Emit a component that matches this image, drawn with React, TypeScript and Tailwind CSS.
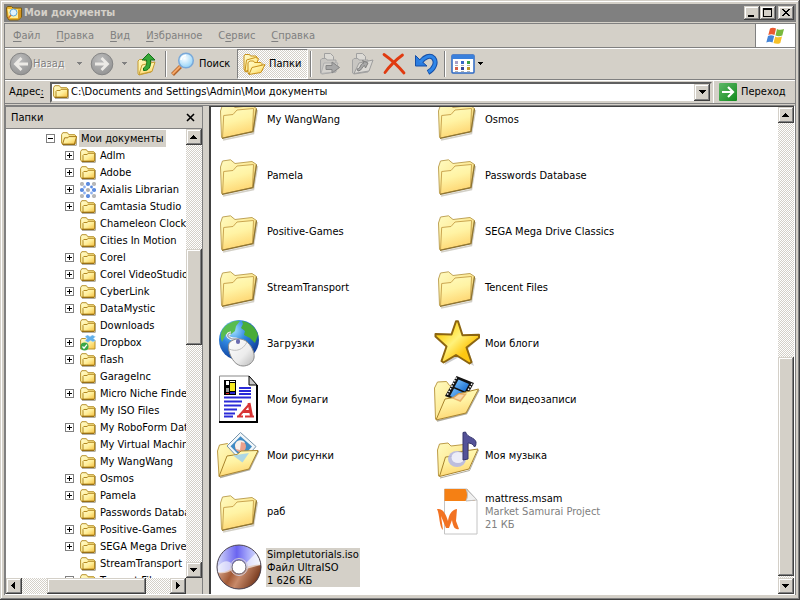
import type { ReactNode } from "react";

type TreeIcon = "folder" | "axialis" | "dropbox";

interface TreeItem {
  name: string;
  expandable?: boolean;
  icon?: TreeIcon;
}

interface FileItem {
  name: string;
  icon: ReactNode;
  details?: string[];
  selected?: boolean;
}

const MENU = [
  ["", "Ф", "айл"],
  ["", "П", "равка"],
  ["", "В", "ид"],
  ["", "И", "збранное"],
  ["С", "е", "рвис"],
  ["", "С", "правка"],
];

const TREE: TreeItem[] = [
  { name: "Adlm", expandable: true },
  { name: "Adobe", expandable: true },
  { name: "Axialis Librarian", expandable: true, icon: "axialis" },
  { name: "Camtasia Studio", expandable: true },
  { name: "Chameleon Clock Files" },
  { name: "Cities In Motion" },
  { name: "Corel", expandable: true },
  { name: "Corel VideoStudio", expandable: true },
  { name: "CyberLink", expandable: true },
  { name: "DataMystic", expandable: true },
  { name: "Downloads" },
  { name: "Dropbox", expandable: true, icon: "dropbox" },
  { name: "flash", expandable: true },
  { name: "GarageInc" },
  { name: "Micro Niche Finder", expandable: true },
  { name: "My ISO Files" },
  { name: "My RoboForm Data", expandable: true },
  { name: "My Virtual Machines" },
  { name: "My WangWang" },
  { name: "Osmos", expandable: true },
  { name: "Pamela", expandable: true },
  { name: "Passwords Database" },
  { name: "Positive-Games", expandable: true },
  { name: "SEGA Mega Drive", expandable: true },
  { name: "StreamTransport" },
  { name: "Tencent Files", expandable: true },
];

const RAISED =
  "bg-[#d4d0c8] shadow-[inset_-1px_-1px_#404040,inset_1px_1px_#d4d0c8,inset_-2px_-2px_#808080,inset_2px_2px_#fff]";
const DITHER =
  "bg-[repeating-conic-gradient(#fff_0_25%,#d4d0c8_0_50%)] bg-[length:2px_2px]";

function Gradients() {
  return (
    <svg className="absolute size-0" aria-hidden="true">
      <defs>
        <linearGradient id="front" x1="0" y1="0" x2="0.3" y2="1">
          <stop offset="0" stopColor="#fffcc0" />
          <stop offset="0.5" stopColor="#fff3a4" />
          <stop offset="1" stopColor="#fed672" />
        </linearGradient>
        <linearGradient id="back" x1="0" y1="0" x2="1" y2="1">
          <stop offset="0" stopColor="#fffbc0" />
          <stop offset="0.5" stopColor="#fdeb98" />
          <stop offset="1" stopColor="#dcb040" />
        </linearGradient>
        <linearGradient id="small" x1="0" y1="0" x2="1" y2="1">
          <stop offset="0" stopColor="#fffcd0" />
          <stop offset="0.5" stopColor="#ffee98" />
          <stop offset="1" stopColor="#f6c040" />
        </linearGradient>
        <radialGradient id="nav" cx="0.4" cy="0.3" r="0.8">
          <stop offset="0" stopColor="#bcbcbc" />
          <stop offset="1" stopColor="#909090" />
        </radialGradient>
        <radialGradient id="globe" cx="0.35" cy="0.25" r="0.85">
          <stop offset="0" stopColor="#a8e4ff" />
          <stop offset="0.4" stopColor="#2e86e0" />
          <stop offset="1" stopColor="#0a2f8c" />
        </radialGradient>
        <linearGradient id="mouse" x1="0" y1="0" x2="1" y2="1">
          <stop offset="0" stopColor="#fff" />
          <stop offset="0.6" stopColor="#ececec" />
          <stop offset="1" stopColor="#b8b8b8" />
        </linearGradient>
        <linearGradient id="star" x1="0" y1="0" x2="1" y2="1">
          <stop offset="0.2" stopColor="#ffd51c" />
          <stop offset="0.45" stopColor="#fff27a" />
          <stop offset="0.7" stopColor="#ffc812" />
        </linearGradient>
        <linearGradient id="discTop" x1="0" y1="0" x2="1" y2="0">
          <stop offset="0" stopColor="#d8dcfa" />
          <stop offset="0.45" stopColor="#6a64f0" />
          <stop offset="0.7" stopColor="#a6a8fa" />
          <stop offset="1" stopColor="#e4ecfc" />
        </linearGradient>
        <linearGradient id="discBottom" x1="0" y1="0" x2="1" y2="0.3">
          <stop offset="0" stopColor="#e0b49c" />
          <stop offset="0.4" stopColor="#a35a36" />
          <stop offset="0.6" stopColor="#c88a6a" />
          <stop offset="1" stopColor="#7a3c20" />
        </linearGradient>
        <radialGradient id="lens" cx="0.4" cy="0.35" r="0.7">
          <stop offset="0" stopColor="#fff" />
          <stop offset="1" stopColor="#8cd0f8" />
        </radialGradient>
        <linearGradient id="go" x1="0" y1="0" x2="1" y2="1">
          <stop offset="0" stopColor="#5fb868" />
          <stop offset="1" stopColor="#118a1c" />
        </linearGradient>
        <linearGradient id="film" x1="0" y1="0" x2="1" y2="1">
          <stop offset="0" stopColor="#7cc4ff" />
          <stop offset="1" stopColor="#0c62c8" />
        </linearGradient>
      </defs>
    </svg>
  );
}

/* ---------- small icons ---------- */

function SmallFolder({ open = false }: { open?: boolean }) {
  return (
    <svg viewBox="0 0 16 16" className="size-4 shrink-0">
      <path d="M2 14.300h13.300V5" fill="none" stroke="#77705c" opacity="0.7" />
      <path d="M.6 12V3.700l1.200-2h4.600l1.400 2h6l1 1.200v7.400l-1 1H1.800z" fill="url(#small)" stroke="#b8922c" />
      {open ? (
        <path d="M1.500 13.200 3.600 6.800h3.200l1-1.200h7.800L13.300 13.200z" fill="url(#small)" stroke="#a87a18" />
      ) : (
        <path d="M3 13.200V7.300l.8-.8h3.400l.9-1.200h6.400v7.900z" fill="url(#small)" stroke="#b48a22" />
      )}
      <path d="M1.500 13.400h12.500" stroke="#956c12" />
    </svg>
  );
}

function AxialisIcon() {
  const dots = [
    [2, 2, "#b8b8b8"], [8, 2, "#5b8be0"], [14, 2, "#b8b8b8"],
    [4.5, 5, "#8fb2f0"], [11.5, 5, "#5b8be0"],
    [2, 8, "#5b8be0"], [8, 8, "#b0b0b0"], [14, 8, "#5b8be0"],
    [4.5, 11, "#8fb2f0"], [11.5, 11, "#8fb2f0"],
    [2, 14, "#b8b8b8"], [8, 14, "#5b8be0"], [14, 14, "#b8b8b8"],
  ] as const;
  return (
    <svg viewBox="0 0 16 16" className="size-4 shrink-0">
      {dots.map(([cx, cy, fill], i) => (
        <circle key={i} cx={cx} cy={cy} r={i === 3 || i === 4 || i === 8 || i === 9 ? 1.4 : 2.1} fill={fill} />
      ))}
    </svg>
  );
}

function DropboxIcon() {
  return (
    <svg viewBox="0 0 16 16" className="size-4 shrink-0">
      <path d="M.6 14V5l1-1.500h4L7 5h8v9z" fill="url(#small)" stroke="#b8922c" />
      <path d="m5 1.500 2.500-1.500 2.500 1.500 2.500-1.500 3 1.800-2 1.700 2 2-2.500 1.500-2.500-1.500L8 7.500 5 5.700l2-2z" fill="#62b0ea" stroke="#cfe8fb" strokeWidth=".5" />
      <circle cx="4.500" cy="11.500" r="4" fill="#3aa648" />
      <path d="m2.500 11.500 1.500 1.700 3-3.500" fill="none" stroke="#fff" strokeWidth="1.300" />
    </svg>
  );
}

function TitleIcon() {
  return (
    <svg viewBox="0 0 16 16" className="size-4 shrink-0">
      <path d="M1 12 .5 3l1-1.500h4L7 3h8.500v9l-3 3H3z" fill="#f0b830" stroke="#7c5c10" />
      <path d="M1.500 4 12 4.500V13H3z" fill="#fff0a0" />
      <path d="M12 5h3v7l-3 2.500z" fill="#d89820" />
      <circle cx="7.500" cy="7.500" r="3.500" fill="#dff3ff" stroke="#62a8dc" />
      <path d="m5 10-2.500 3" stroke="#d8762a" strokeWidth="1.500" />
    </svg>
  );
}

function NavCircle({ forward = false }: { forward?: boolean }) {
  return (
    <svg viewBox="0 0 24 24" className="size-6 shrink-0">
      <circle cx="12" cy="12" r="10.800" fill="url(#nav)" stroke="#858585" />
      <path
        d={forward ? "M5 12h12M11.500 6l6 6-6 6" : "M19 12H7M12.500 6l-6 6 6 6"}
        fill="none"
        stroke="#eceae6"
        strokeWidth="2.800"
      />
    </svg>
  );
}

function Caret({ light = false }: { light?: boolean }) {
  return (
    <svg viewBox="0 0 7 4" className="h-1 w-[7px] shrink-0" shapeRendering="crispEdges">
      <path d="M1 0h5v1H5v1H4v1H3V2H2V1H1z" fill={light ? "#808080" : "#000"} />
    </svg>
  );
}

function UpIcon() {
  return (
    <svg viewBox="0 0 24 24" className="size-6 shrink-0">
      <path d="M2 21.500V9L3.500 7.500H8L9 9h6v11l-12 3z" fill="url(#back)" stroke="#c49a30" />
      <path d="M3 22.500 6 13l13-3-3 9.500z" fill="url(#front)" stroke="#c49a30" />
      <path d="M7.500 18.500c5 .5 7.500-3 7-10.500h4.500L12.500 1.500 6 8h4.500c.5 4 0 6-3 8z" fill="#37a837" stroke="#147018" />
    </svg>
  );
}

function SearchIcon() {
  return (
    <svg viewBox="0 0 24 24" className="size-6 shrink-0">
      <path d="M9.500 14.500 1.500 22.500" stroke="#b0622a" strokeWidth="4" />
      <path d="M9 14.500 1.500 22" stroke="#f5a868" strokeWidth="2" />
      <circle cx="15" cy="8.500" r="7.300" fill="url(#lens)" stroke="#7aa8d8" strokeWidth="1.500" />
      <path d="M10 8a5 5 0 0 1 5-4.500" stroke="#fff" strokeWidth="1.500" fill="none" />
    </svg>
  );
}

function FoldersIcon() {
  return (
    <svg viewBox="0 0 24 24" className="size-6 shrink-0">
      <path d="M2 17V4l1-1.500h4.500l1 1.500H14l1 1v11L3.500 20z" fill="url(#small)" stroke="#c8911c" />
      <path d="M3 19.500 4.500 8l9-2.500 3 1-3 9z" fill="url(#small)" stroke="#c8911c" />
      <path d="M6 21V10.500L8 9h3.500l1 1.500H19l1 1V19L7 22z" fill="url(#small)" stroke="#c8911c" />
      <path d="M7 22.500 10 15.500l13-3-4 8z" fill="url(#small)" stroke="#c8911c" />
    </svg>
  );
}

function MoveIcon({ copy = false }: { copy?: boolean }) {
  return (
    <svg viewBox="0 0 24 24" className="size-6 shrink-0">
      <path d="M6.500 1.500h6l3 3v9h-9z" fill="#dcdad5" stroke="#a0a0a0" />
      <path d="M2.500 21V8L4 6.500h4L9 8h9v12l-14 2z" fill="#c8c6c2" stroke="#a4a4a4" />
      {copy ? (
        <>
          <path d="M4 21.500 9 11l14-3-4 11z" fill="#dbd9d5" stroke="#9c9c9c" />
          <path d="M7 17c4 0 3-6 7-6l-1.500-2.500L18 11l-2.500 5-1-2.500C12 14 12 19 8 19z" fill="#a8a8a8" stroke="#808080" />
        </>
      ) : (
        <>
          <path d="M3 21.500 6 11h14l-3 9z" fill="#d4d2ce" stroke="#b0b0b0" />
          <path d="M8 13.500h6v-3.500l7.500 5.500-7.500 5.500v-3.500H8z" fill="#a8a8a8" stroke="#858585" />
        </>
      )}
    </svg>
  );
}

function DeleteIcon() {
  return (
    <svg viewBox="0 0 24 24" className="size-6 shrink-0">
      <path d="M2 2.500C7 6 17 15 22 21M20.500 3C15 7 7 15 3 20.500" fill="none" stroke="#e03a10" strokeWidth="2.800" strokeLinecap="round" />
    </svg>
  );
}

function UndoIcon() {
  return (
    <svg viewBox="0 0 24 24" className="size-6 shrink-0">
      <path d="M7 9.500C10 5 16 2.500 19.500 6c3.500 4 1 11-5.500 14.500" fill="none" stroke="#174fa6" strokeWidth="5" />
      <path d="M1.500 3.500V14h11.500L9 10.500 5 7z" fill="#2a7ce0" stroke="#174fa6" />
      <path d="M6 10.500C10 5 16 2.500 19.500 6c3.500 4 1 10.500-5 14" fill="none" stroke="#2f86e8" strokeWidth="3" />
    </svg>
  );
}

function ViewsIcon() {
  const colors = ["#a8a0c8", "#3868c8", "#38a048", "#d86048", "#384898", "#c09828"];
  return (
    <svg viewBox="0 0 24 24" className="size-6 shrink-0">
      <rect x="1" y="3" width="22" height="18" rx="1" fill="#fff" stroke="#2c68c4" strokeWidth="1.500" />
      <path d="M1 3h22v4H1z" fill="#3a80dc" />
      {colors.map((c, i) => (
        <g key={c}>
          <rect x={4 + (i % 3) * 6} y={i < 3 ? 9 : 15} width="3" height="3" fill={c} />
          <path d={`M${4 + (i % 3) * 6} ${i < 3 ? 13.5 : 19.5}h3`} stroke="#b0b0b0" />
        </g>
      ))}
    </svg>
  );
}

function GoIcon() {
  return (
    <svg viewBox="0 0 18 18" className="size-[18px] shrink-0">
      <rect width="18" height="18" rx="1" fill="url(#go)" />
      <path d="M3 9h10M9 4l5 5-5 5" fill="none" stroke="#fff" strokeWidth="2.200" />
    </svg>
  );
}

function WindowsLogo() {
  return (
    <svg viewBox="0 0 20 20" className="size-5">
      <path d="M4 2.500c2-1.200 4-1 6 0L8.500 9c-2-1-4-1-6.200 0z" fill="#ea5a30" />
      <path d="M11 3c2.500 1.200 4.500 1 7 0l-1.700 6.500c-2.300 1-4.500 1-6.800 0z" fill="#78b83c" />
      <path d="M2 10c2.200-1.200 4.200-1 6.200 0l-1.700 6.500c-2-1-4-1-6.200 0z" fill="#4484d8" />
      <path d="M9.200 10.500c2.300 1.200 4.500 1 6.800 0L14.300 17c-2.300 1.200-4.500 1-6.800 0z" fill="#f6c028" />
    </svg>
  );
}

/* ---------- 48px icons ---------- */

function FolderIcon() {
  return (
    <svg viewBox="0 0 48 48" className="size-12 shrink-0">
      <path d="M7 45 37.500 38.500 41.500 15" fill="none" stroke="#a8a290" strokeWidth="1.500" opacity="0.5" />
      <path d="M5.500 42.500 4.500 16l2-6 8-1.200 4.500 3.700L36 10.500l4.500 3L37 36.500z" fill="url(#back)" stroke="#c0a458" />
      <path d="m6.500 43 1.200-22.500 9.300-1 4-4.500L37.500 13.500 36.500 36.500z" fill="url(#front)" stroke="#cba650" />
      <path d="m6 43.300 31-6.600 3.500-23" fill="none" stroke="#8d7434" strokeWidth="1.200" />
    </svg>
  );
}

function OpenFolder({ children }: { children: ReactNode }) {
  return (
    <svg viewBox="0 0 48 48" className="size-12 shrink-0">
      <path d="M3.500 45 1.500 16l2-5 8-1.500 3 3.500 18-2.500V35z" fill="url(#back)" stroke="#bd9c48" />
      {children}
      <path d="M4 46.500 35 39l9.500-22.500" fill="none" stroke="#8c8670" strokeWidth="1.500" opacity="0.7" />
      <path d="m3.500 45.500 7-19.500 11-1.500 4-4.500L44 16 34.500 38z" fill="url(#front)" stroke="#a8832c" />
    </svg>
  );
}

function PicturesIcon() {
  return (
    <svg viewBox="0 0 48 48" className="size-12 shrink-0">
      <path d="M3 45 1.500 20l2-6 8-1.500 3 3 18-2V35z" fill="url(#back)" stroke="#bd9c48" />
      <path d="m11 15 13.500-13.500L40 15.500 26 31z" fill="#f2f7fa" stroke="#7895ab" />
      <path d="m14.500 15.200 10-10L36 15.500 26 27z" fill="#408bc4" />
      <circle cx="24.500" cy="15.500" r="5.500" fill="#eaa08c" />
      <path d="M19 15c0-7 9-7 10-3l-4-1-1 8-4-1z" fill="#f8f0ea" />
      <path d="M4 46.500 33.500 38.500 42.500 20" fill="none" stroke="#8c8670" strokeWidth="1.500" opacity="0.7" />
      <path d="m3 45.500 8-20.500 10-1.500 4-3.500L42 19.500 33 38z" fill="url(#front)" stroke="#a8832c" />
      <path d="m17 24.500 16-2.500-6.500 9.500z" fill="#a4d4ea" opacity="0.9" />
    </svg>
  );
}

function VideosIcon() {
  return (
    <svg viewBox="0 0 48 48" className="size-12 shrink-0">
      <path d="M1.500 44 .5 13l3-6 9-.5 3 4 15-1.500V35z" fill="url(#back)" stroke="#bd9c48" />
      <path d="M22.500 1 40 8 29 28 11 21z" fill="#111" />
      <path d="m24.500 4.500 10.500 4.500-4 7.500-10.500-4.500z" fill="url(#film)" />
      <path d="m20 13.500 10.500 4.500-4 7.500-10.500-4.500z" fill="url(#film)" />
      <path d="M22.500 2.500 13 20.500M38 8.500 28.500 25" stroke="#fff" strokeWidth="1.500" strokeDasharray="1.500 1.500" />
      <path d="M3 46 32.500 38.500 45 15" fill="none" stroke="#8c8670" strokeWidth="1.500" opacity="0.7" />
      <path d="m2 45 9-21 9-1.500 4-3.500L44.500 14 32 38z" fill="url(#front)" stroke="#a8832c" />
      <path d="m17 23 8-5 8 .5-6.500 8.500z" fill="#e2a058" opacity="0.8" />
      <path d="m20 23 5-3.500 5 .5-4 5z" fill="#f8d8a8" />
    </svg>
  );
}

function MusicIcon() {
  return (
    <svg viewBox="0 0 48 48" className="size-12 shrink-0">
      <path d="M4.500 45 3.500 19l2-6 8.500-1 3 3 17-2v23z" fill="url(#back)" stroke="#bd9c48" />
      <path d="m5.500 45.500 6-19.500 9-1 3-4L44 18l-9 20z" fill="url(#front)" stroke="#a8832c" />
      <path d="M6 47 35.500 39.500 44.500 19" fill="none" stroke="#8c8670" opacity="0.7" />
      <ellipse cx="23" cy="28" rx="9" ry="8" fill="#b6b8e4" opacity="0.9" />
      <ellipse cx="24" cy="26.500" rx="6.500" ry="5.500" fill="#f2f2fb" opacity="0.9" />
      <path d="M29 29V1.500l2.500-.5c2 6 9 5 10.500 10 0 2 0 4-1.500 5-1-3-4-4-6.500-4v16z" fill="#545298" stroke="#34346c" />
    </svg>
  );
}

function OpenGlobe() {
  return (
    <svg viewBox="0 0 48 48" className="size-12 shrink-0">
      <circle cx="23" cy="21" r="20" fill="url(#globe)" />
      <path d="M12 5c5-3 9-4 12-3l-4 5-1 5-5 4-4-1-4 8C3 15 6 9 12 5z" fill="#58bc50" />
      <path d="M26 2c8 1 14 7 16 14l-3 8-5-5-6-3 1-4-4-3 2-4z" fill="#48ac38" />
      <path d="M23 24c-1-7-5-2-9-5-4-2-2-5 1-5" fill="none" stroke="#fff" strokeWidth="3" />
      <path d="M23 24c-1-7-5-2-9-5-4-2-2-5 1-5" fill="none" stroke="#a0a8b4" strokeWidth="1.500" />
      <path d="M14 23c5-4 11-4 16-1 5 4 9 11 8 17-1 5-6 8-11 8-7 0-12-7-14-15-1-4-1-7 1-9z" fill="url(#mouse)" stroke="#8c8c8c" />
      <path d="M13 30c7 3 14 1 18-7" fill="none" stroke="#c0c0c0" />
      <rect x="20" y="20" width="4" height="5" rx="2" fill="#6a6cb0" />
    </svg>
  );
}

function PapersIcon() {
  return (
    <svg viewBox="0 0 48 48" className="size-12 shrink-0">
      <path d="M3.500 1H33l8 9v37H3.500z" fill="#fff" stroke="#888" />
      <path d="M41 10v37H3" fill="none" stroke="#000" strokeWidth="2" />
      <path d="M33 1v9h8z" fill="#c8c8c8" stroke="#000" />
      <path d="M8 5h12v15H8z" fill="#000" />
      <path d="M10 6h3v4h-3z" fill="#fff" />
      <path d="M10 13h3v4h-3z" fill="#999" />
      <path d="M14 8h5v8h-5z" fill="#f6ea20" />
      <path d="M14 6h5v1h-5z" fill="#fff" />
      <path d="M10 18h3v1h-3z" fill="#e02020" />
      <path d="M14 17h5v2h-5z" fill="#2828d0" />
      <path d="M23 13h12M23 16h12M23 19h12M8 22.500h27M8 26.500h18M8 30.500h17M8 34.500h13M8 38.500h11M8 41.500h9" stroke="#2a2ad8" strokeWidth="2" />
      <path d="M21 41.500h6M29 41.500h9M23 41 33.500 29" fill="none" stroke="#d83434" strokeWidth="2" />
      <path d="m33 28 2.500 13M27 36.500h8" fill="none" stroke="#d83434" strokeWidth="3" />
    </svg>
  );
}

function DiscIcon() {
  return (
    <svg viewBox="0 0 48 48" className="size-12 shrink-0">
      <circle cx="23" cy="24" r="22" fill="url(#discTop)" />
      <path d="M1.500 29C9 30 14 27 17 24h13c5-1 10-3 15-2 1 14-8 24-22 24C12 46 3 38 1.500 29z" fill="url(#discBottom)" />
      <path d="M1.500 24C10 13 18 20 17 26c-4 4-10 5-15 4z" fill="#fff" opacity="0.6" />
      <path d="M29 21 40 10c4 4 5 9 5 12l-15 4z" fill="#fff" opacity="0.65" />
      <circle cx="23" cy="24" r="22" fill="none" stroke="#4a4350" />
      <circle cx="23" cy="24" r="7" fill="#fff" stroke="#646070" />
      <circle cx="23" cy="24" r="8.500" fill="none" stroke="#d2ccd8" />
    </svg>
  );
}

function StarIcon() {
  return (
    <svg viewBox="0 0 48 48" className="size-12 shrink-0">
      <path d="m24 4 5 13 16 1.500L34 30l6 17-15-9-14.500 8 5-16L3 19l16.500-1z" fill="#9a9a9a" opacity="0.5" />
      <path d="M22 2.200h2l4.500 14 16.500-.4v3L32.500 28.500 37.500 43l-2 1.500L22 36 9.500 43.500l-2-1.500 5-14.500L1.500 17.500v-2.500l16 .5z" fill="url(#star)" stroke="#8c6510" strokeWidth="2" strokeLinejoin="round" />
    </svg>
  );
}

function MarketIcon() {
  return (
    <svg viewBox="0 0 48 48" className="size-12 shrink-0">
      <path d="M10.500 2H33l10 11v34H10.500z" fill="#fff" stroke="#c4c4c4" />
      <path d="M10.500 2H33l8 12H10.500z" fill="#f58014" />
      <path d="M32 2c2 4 2 8 0 12l11-1z" fill="#f0f0f0" stroke="#c0c0c0" />
      <path d="M3 22c6-1 9 5 11 12 1-6 3-11 9-12l-1 12 3 8c-4 1-6-2-7-9l-3 8h-3L7 29l2 14c-4-3-3-15-6-21z" fill="#f27222" />
    </svg>
  );
}

const FILES: FileItem[] = [
  { name: "My WangWang", icon: <FolderIcon /> },
  { name: "Osmos", icon: <FolderIcon /> },
  { name: "Pamela", icon: <FolderIcon /> },
  { name: "Passwords Database", icon: <FolderIcon /> },
  { name: "Positive-Games", icon: <FolderIcon /> },
  { name: "SEGA Mega Drive Classics", icon: <FolderIcon /> },
  { name: "StreamTransport", icon: <FolderIcon /> },
  { name: "Tencent Files", icon: <FolderIcon /> },
  { name: "Загрузки", icon: <OpenGlobe /> },
  { name: "Мои блоги", icon: <StarIcon /> },
  { name: "Мои бумаги", icon: <PapersIcon /> },
  { name: "Мои видеозаписи", icon: <VideosIcon /> },
  { name: "Мои рисунки", icon: <PicturesIcon /> },
  { name: "Моя музыка", icon: <MusicIcon /> },
  { name: "раб", icon: <FolderIcon /> },
  { name: "mattress.msam", icon: <MarketIcon />, details: ["Market Samurai Project", "21 КБ"] },
  { name: "Simpletutorials.iso", icon: <DiscIcon />, details: ["Файл UltraISO", "1 626 КБ"], selected: true },
];

/* ---------- controls ---------- */

function ArrowButton({ direction }: { direction: "up" | "down" | "left" | "right" }) {
  const paths = {
    up: "M7 6h1v1h1v1h1v1h1v1H4V9h1V8h1V7h1z",
    down: "M4 6h7v1h-1v1H9v1H8v1H7V9H6V8H5V7H4z",
    left: "M9 4v7H8v-1H7V9H6V8H5V7h1V6h1V5h1V4z",
    right: "M6 4v7h1v-1h1V9h1V8h1V7H9V6H8V5H7V4z",
  };
  return (
    <button aria-label={`Scroll ${direction}`} className={`size-4 shrink-0 ${RAISED}`}>
      <svg viewBox="0 0 16 16" className="size-4" shapeRendering="crispEdges">
        <path d={paths[direction]} />
      </svg>
    </button>
  );
}

function VerticalScroll({ before, thumb, after }: { before: number; thumb: number; after: number }) {
  return (
    <div className={`flex w-4 shrink-0 flex-col ${DITHER}`}>
      <ArrowButton direction="up" />
      <div className="flex min-h-0 flex-1 flex-col">
        <div style={{ flexGrow: before }} />
        <div className={RAISED} style={{ flexGrow: thumb }} />
        <div style={{ flexGrow: after }} />
      </div>
      <ArrowButton direction="down" />
    </div>
  );
}

function Separator() {
  return <div className="h-[26px] w-[2px] shrink-0 border-l border-[#808080] bg-white" />;
}

function CaptionButton({ label, children }: { label: string; children: ReactNode }) {
  return (
    <button aria-label={label} className={`h-[14px] w-4 ${RAISED}`}>
      <svg viewBox="0 0 16 14" className="h-[14px] w-4" shapeRendering="crispEdges">
        {children}
      </svg>
    </button>
  );
}

function ExpandBox({ open = false }: { open?: boolean }) {
  return (
    <button aria-label={open ? "Collapse" : "Expand"} className="size-[9px] shrink-0">
      <svg viewBox="0 0 9 9" className="size-[9px]" shapeRendering="crispEdges">
        <rect x="0.5" y="0.5" width="8" height="8" fill="#fff" stroke="#808080" />
        <path d="M2 4h5v1H2z" />
        {!open && <path d="M4 2h1v5H4z" />}
      </svg>
    </button>
  );
}

function TitleBar() {
  return (
    <header className="flex h-[18px] shrink-0 items-center bg-[#808080] px-[2px]">
      <TitleIcon />
      <h1 className="ml-[2px] flex-1 font-bold text-[#d4d0c8]">Мои документы</h1>
      <CaptionButton label="Minimize">
        <path d="M4 9h6v2H4z" />
      </CaptionButton>
      <CaptionButton label="Maximize">
        <path d="M3 2h9v9H3zM4 4v6h7V4z" fillRule="evenodd" />
      </CaptionButton>
      <div className="w-[2px]" />
      <CaptionButton label="Close">
        <path d="M4 3h2v1h1v1h2V4h1V3h2v1h-1v1h-1v1H9v1h1v1h1v1h1v1h-2V9H9V8H7v1H6v1H4V9h1V8h1V7h1V6H6V5H5V4H4z" />
      </CaptionButton>
    </header>
  );
}

function MenuBar() {
  return (
    <div className="flex h-6 shrink-0 border-b border-[#808080]">
      <nav className="flex flex-1 items-center border-r border-[#808080] text-[#808080]">
        {MENU.map(([before, key, after]) => (
          <button key={key + after} className="px-2">
            {before}
            <u className="underline-offset-2">{key}</u>
            {after}
          </button>
        ))}
      </nav>
      <div className="flex w-[39px] items-center justify-center bg-white">
        <WindowsLogo />
      </div>
    </div>
  );
}

function Toolbar() {
  return (
    <div className="flex h-8 shrink-0 items-center border-t border-b border-t-white border-b-[#808080] pl-1">
      <button className="flex items-center text-[#808080] [text-shadow:1px_1px_#fff]">
        <NavCircle />
        <span className="w-[43px] text-left">Назад</span>
        <Caret light />
      </button>
      <button aria-label="Вперед" className="ml-[7px] flex items-center gap-[7px]">
        <NavCircle forward />
        <Caret light />
      </button>
      <button aria-label="Вверх" className="mr-[5px] ml-2">
        <UpIcon />
      </button>
      <Separator />
      <button className="ml-1 flex w-[66px] items-center gap-1">
        <SearchIcon />
        Поиск
      </button>
      <button
        className={`mr-[2px] flex h-[30px] w-[71px] items-center gap-[3px] border border-t-[#808080] border-r-white border-b-white border-l-[#808080] pl-1 ${DITHER}`}
      >
        <FoldersIcon />
        Папки
      </button>
      <Separator />
      <div className="mr-[6px] ml-[6px] flex items-center gap-2">
        <button aria-label="Переместить"><MoveIcon /></button>
        <button aria-label="Копировать"><MoveIcon copy /></button>
        <button aria-label="Удалить"><DeleteIcon /></button>
        <button aria-label="Отменить"><UndoIcon /></button>
      </div>
      <Separator />
      <button aria-label="Вид" className="ml-[5px] flex items-center gap-[2px]">
        <ViewsIcon />
        <Caret />
      </button>
    </div>
  );
}

function AddressBar() {
  return (
    <div className="flex h-6 shrink-0 items-center border-t border-b border-t-white border-b-[#808080] pl-1">
      <label htmlFor="address" className="w-[41px]">
        Адрес<u className="underline-offset-2">:</u>
      </label>
      <div className="flex h-[21px] flex-1 items-center border-2 border-t-[#606060] border-r-[#d4d0c8] border-b-[#d4d0c8] border-l-[#606060] bg-white pl-px">
        <SmallFolder />
        <input
          id="address"
          className="ml-[2px] min-w-0 flex-1 outline-none"
          defaultValue="C:\Documents and Settings\Admin\Мои документы"
        />
        <button aria-label="Список адресов" className={`flex h-[17px] w-4 items-center justify-center ${RAISED}`}>
          <svg viewBox="0 0 7 4" className="h-1 w-[7px]" shapeRendering="crispEdges">
            <path d="M0 0h7v1H6v1H5v1H4v1H3V3H2V2H1V1H0z" />
          </svg>
        </button>
      </div>
      <button className="ml-px flex h-full w-[82px] items-center gap-1 border-l border-white pl-[5px]">
        <GoIcon />
        Переход
      </button>
    </div>
  );
}

function FolderTree() {
  return (
    <aside className="flex w-[198px] shrink-0 flex-col border-t border-r border-l border-[#808080]">
      <div className="flex h-[22px] shrink-0 items-center justify-between border-b border-[#808080] pr-[7px] pl-[5px]">
        <h2>Папки</h2>
        <button aria-label="Закрыть">
          <svg viewBox="0 0 9 9" className="size-[9px]">
            <path d="m1 1 7 7M8 1 1 8" stroke="#000" strokeWidth="1.600" />
          </svg>
        </button>
      </div>
      <div className="flex min-h-0 flex-1">
        <ul className="min-w-0 flex-1 overflow-hidden bg-white pt-px whitespace-nowrap">
          <li className="flex h-[17px] items-center pl-10">
            <ExpandBox open />
            <span className="ml-[6px] flex items-center gap-[2px]">
              <SmallFolder open />
              <span className="bg-[#d4d0c8] px-[2px] leading-[17px]">Мои документы</span>
            </span>
          </li>
          {TREE.map((item) => (
            <li key={item.name} className="flex h-[17px] items-center pl-[59px]">
              {item.expandable ? <ExpandBox /> : <span className="w-[9px] shrink-0" />}
              <span className="ml-[6px] flex items-center gap-1">
                {item.icon === "axialis" ? <AxialisIcon /> : item.icon === "dropbox" ? <DropboxIcon /> : <SmallFolder />}
                {item.name}
              </span>
            </li>
          ))}
        </ul>
        <VerticalScroll before={104} thumb={96} after={218} />
      </div>
      <div className={`mr-4 flex h-4 shrink-0 ${DITHER}`}>
        <ArrowButton direction="left" />
        <div className="flex flex-1">
          <div className="grow-[25]" />
          <div className={`grow-[99] ${RAISED}`} />
          <div className="grow-[24]" />
        </div>
        <ArrowButton direction="right" />
      </div>
    </aside>
  );
}

function FilePane() {
  return (
    <main className="flex min-w-0 flex-1 overflow-hidden border-t border-l-2 border-[#404040] bg-white">
      <div className="min-w-0 flex-1 overflow-hidden">
        {/* scrolled part-way down, so the first row is cut by the top edge */}
        <ul className="-mt-4 grid grid-cols-[repeat(2,218px)] pl-[5px]">
          {FILES.map((file) => (
            <li key={file.name} className="flex h-14 items-center gap-[2px]">
              {file.icon}
              <div className={`px-px leading-[13px] ${file.selected ? "bg-[#d4d0c8]" : ""}`}>
                <p>{file.name}</p>
                {file.details?.map((line) => (
                  <p key={line} className={file.selected ? "" : "text-[#808080]"}>
                    {line}
                  </p>
                ))}
              </div>
            </li>
          ))}
        </ul>
      </div>
      <VerticalScroll before={235} thumb={219} after={2} />
    </main>
  );
}

export default function App() {
  return (
    <div className="flex h-screen flex-col bg-[#d4d0c8] p-1 pb-[5px] font-['DejaVu_Sans_Condensed','Noto_Sans',sans-serif] text-[11px] leading-[14px] text-black shadow-[inset_-1px_-1px_#404040,inset_1px_1px_#d4d0c8,inset_-2px_-2px_#808080,inset_2px_2px_#fff]">
      <Gradients />
      <TitleBar />
      <div className="mt-px flex min-h-0 flex-1 flex-col border-t border-r border-l border-[#808080]">
        <MenuBar />
        <Toolbar />
        <AddressBar />
        <div className="mt-px flex min-h-0 flex-1 gap-[6px] border-t border-r border-b border-t-[#808080] border-r-white border-b-white">
          <FolderTree />
          <FilePane />
        </div>
      </div>
    </div>
  );
}
